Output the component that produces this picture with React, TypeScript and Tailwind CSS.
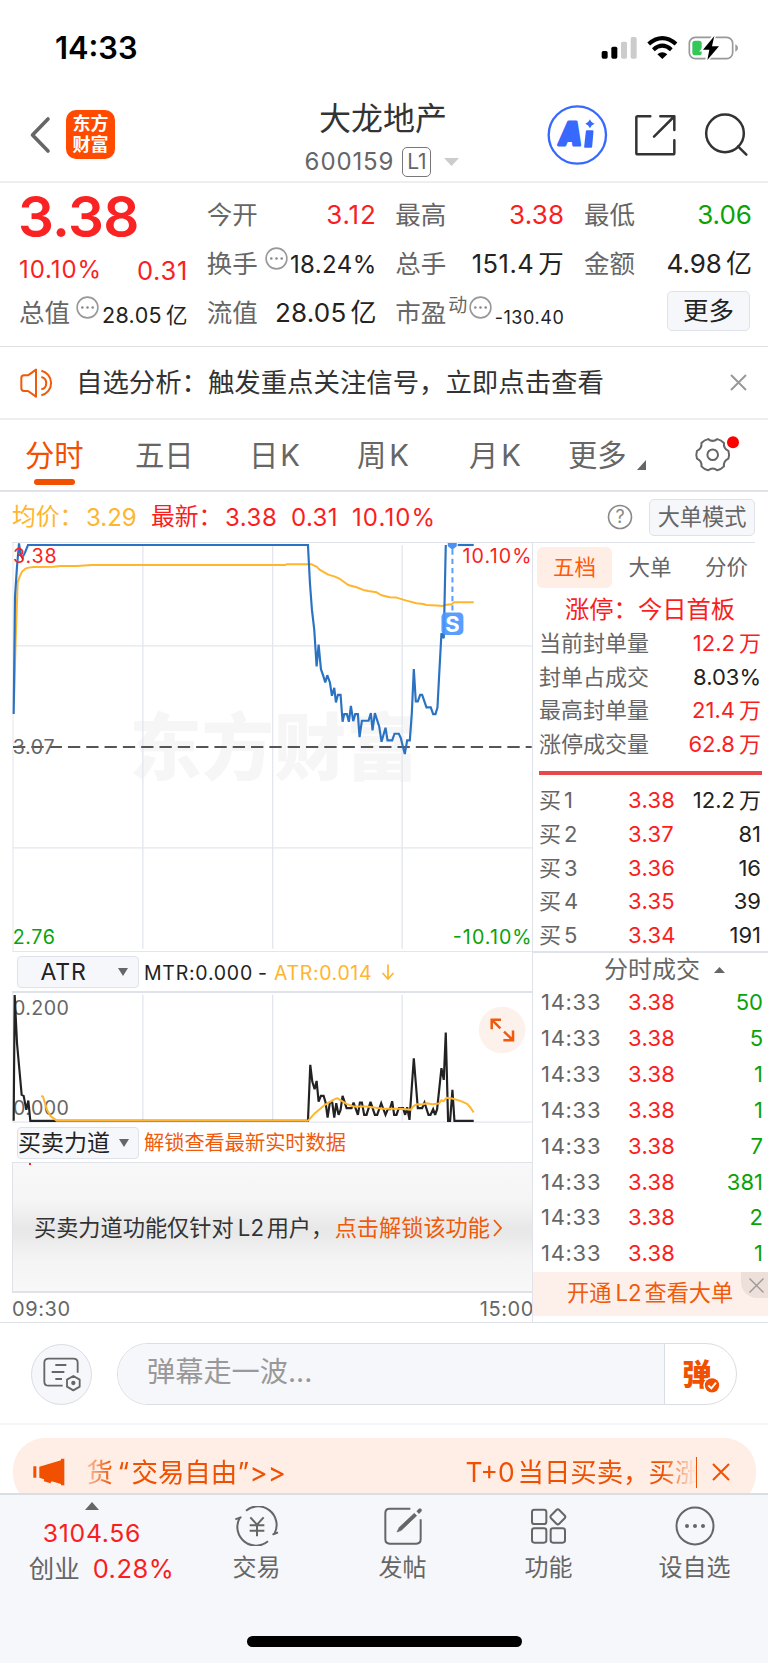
import React from "react";

type Level = { label: string; price: string; volume: string; unit?: string };

const levels: Level[] = [
  { label: "1", price: "3.38", volume: "12.2", unit: "万" },
  { label: "2", price: "3.37", volume: "81" },
  { label: "3", price: "3.36", volume: "16" },
  { label: "4", price: "3.35", volume: "39" },
  { label: "5", price: "3.34", volume: "191" },
];

const ticks = ["50", "5", "1", "1", "7", "381", "2", "1"];

const limitRows = [
  { label: "当前封单量", value: "12.2", unit: "万", tone: "text-[#fa1e1e]" },
  { label: "封单占成交", value: "8.03%", unit: "", tone: "text-[#222]" },
  { label: "最高封单量", value: "21.4", unit: "万", tone: "text-[#fa1e1e]" },
  { label: "涨停成交量", value: "62.8", unit: "万", tone: "text-[#fa1e1e]" },
];

const pricePoints =
  "40,913 44,560 50,470 56,400 61,434 66,443 74,428 83,405 924,405 930,520 936,600 943,660 950,770 956,704 963,778 970,798 976,818 982,796 990,818 996,858 1003,834 1008,878 1014,855 1022,855 1028,936 1033,913 1041,913 1047,936 1053,888 1060,934 1066,913 1074,913 1079,982 1086,933 1106,933 1113,910 1118,962 1125,910 1138,950 1145,996 1157,954 1163,992 1177,992 1184,972 1197,972 1203,985 1209,1010 1215,1033 1222,992 1230,992 1236,910 1242,778 1248,875 1254,875 1261,855 1267,855 1280,893 1293,893 1300,913 1307,913 1313,893 1319,780 1325,670 1332,685 1338,405";

const averagePoints =
  "41,880 46,690 52,518 58,500 65,485 75,476 85,473 100,471 160,470 180,468 230,468 275,465 855,465 860,463 935,463 950,470 960,480 985,494 1005,500 1020,507 1045,525 1070,532 1090,540 1105,543 1130,547 1145,556 1170,562 1190,563 1220,572 1250,580 1270,582 1280,585 1310,587 1330,588 1335,585 1355,583 1363,577 1422,577";

const mtrPoints =
  "40,423 43,45 50,190 64,345 70,348 78,390 84,362 90,423 924,423 931,255 937,305 944,328 950,303 956,365 963,348 971,348 977,368 983,413 990,367 997,368 1003,413 1009,370 1016,405 1022,390 1028,348 1040,385 1055,385 1061,368 1074,405 1080,368 1086,368 1093,405 1100,405 1112,366 1125,405 1132,405 1144,370 1157,405 1164,388 1170,388 1177,364 1183,405 1190,405 1197,385 1210,385 1216,405 1222,382 1229,420 1242,235 1248,310 1254,385 1267,385 1274,368 1286,405 1292,405 1300,388 1306,405 1312,388 1325,265 1332,300 1338,158 1345,423 1351,423 1358,330 1364,423 1422,423";

const atrPoints =
  "122,349 128,350 140,390 150,408 170,423 924,423 945,400 975,375 1000,360 1012,355 1040,372 1060,380 1100,380 1150,387 1202,387 1232,390 1242,378 1252,373 1267,374 1282,370 1297,373 1317,371 1325,361 1332,364 1340,354 1357,356 1382,363 1402,372 1412,383 1422,398";

function Unit({ children }: { children: React.ReactNode }) {
  return <span className="ml-[4px]">{children}</span>;
}

function InfoDot() {
  return (
    <svg className="h-[23px] w-[23px] shrink-0" viewBox="0 0 23 23">
      <circle cx="11.5" cy="11.5" r="10.4" fill="none" stroke="#999" strokeWidth="1.6" />
      <circle cx="6.3" cy="11.5" r="1.3" fill="#888" />
      <circle cx="11.5" cy="11.5" r="1.3" fill="#888" />
      <circle cx="16.7" cy="11.5" r="1.3" fill="#888" />
    </svg>
  );
}

function StatusBar() {
  return (
    <div className="flex h-[95px] items-center justify-between pl-[55px] pr-[29px]">
      <span className="pt-px text-[30.8px] font-semibold text-black">14:33</span>
      <svg className="h-[30px] w-[138px]" viewBox="652 97 414 90">
        <rect x="654" y="151" width="18" height="23" rx="5" />
        <rect x="683" y="138" width="18" height="36" rx="5" />
        <rect x="712" y="123" width="18" height="51" rx="5" fill="#ccc" />
        <rect x="741" y="109" width="18" height="65" rx="5" fill="#ccc" />
        <path d="M795 130Q836 95 877 130" fill="none" stroke="#000" strokeWidth="12.5" />
        <path d="M809 147Q836 123 863 147" fill="none" stroke="#000" strokeWidth="12" />
        <path d="M821 161Q836 149 851 161L836 175Z" />
        <rect x="917" y="110" width="130" height="64" rx="18" fill="none" stroke="#999" strokeWidth="5" />
        <path d="M1055 131Q1063 134 1063 142Q1063 150 1055 153Z" fill="#999" />
        <rect x="926" y="120" width="28" height="44" rx="8" fill="#34c759" />
        <path d="M992 104L956 148H976L969 180L1007 136H986Z" stroke="#fff" strokeWidth="9" />
        <path d="M992 106L958 147H977L971 178L1006 137H985Z" />
      </svg>
    </div>
  );
}

function Header() {
  return (
    <div className="flex h-[88px] items-start border-b-2 border-[#eee]">
      <div className="flex w-[302px] items-center pl-[29px] pt-[15px]">
        <svg className="h-[38px] w-[22px]" viewBox="0 0 22 38">
          <path d="M19 3L3.5 19L19 35" fill="none" stroke="#666" strokeWidth="3.6" strokeLinecap="round" strokeLinejoin="round" />
        </svg>
        <div className="ml-[15px] flex h-[49px] w-[49px] flex-col items-center justify-center rounded-[10px] bg-[#ff4a00] text-[18px] font-bold leading-[20.5px] text-white">
          <span>东方</span>
          <span>财富</span>
        </div>
      </div>
      <div className="flex w-[162px] flex-col items-center pt-[2px]">
        <span className="text-[32px] leading-[43px] text-[#333]">大龙地产</span>
        <div className="flex h-[43px] items-center pr-[2px]">
          <span className="text-[24px] tracking-[0.9px] text-[#666]">600159</span>
          <span className="ml-[8px] flex h-[30px] w-[29px] items-center justify-center rounded-[5px] border-[1.5px] border-[#777] text-[21px] text-[#666]">L1</span>
          <svg className="ml-[13px] h-[8px] w-[15px]" viewBox="0 0 15 8">
            <path d="M0 0H15L7.5 8Z" fill="#ccc" />
          </svg>
        </div>
      </div>
      <svg className="ml-[82px] mt-[9px] h-[62px] w-[210px]" viewBox="486 312 630 186">
        <circle cx="580" cy="405" r="86" fill="none" stroke="#3769ff" strokeWidth="7" />
        <text x="525" y="435" fontSize="93" fontWeight="900" fontStyle="italic" fill="#3769ff" stroke="#3769ff" strokeWidth="9" strokeLinejoin="round" textLength="68" lengthAdjust="spacingAndGlyphs">A</text>
        <path d="M609 394H625L621 440H604Z" fill="#3769ff" stroke="#3769ff" strokeWidth="7" strokeLinejoin="round" />
        <path d="M618 358Q621 368 632 371Q621 375 618 385Q614 375 604 371Q614 368 618 358Z" fill="#3769ff" />
        <g fill="none" stroke="#333" strokeWidth="7.5" strokeLinecap="round" strokeLinejoin="round">
          <path d="M799 349H761Q757 349 757 353V459Q757 463 761 463H867Q871 463 871 459V421" />
          <path d="M829 349H871V390M869 351L810 410" />
          <circle cx="1023" cy="400" r="56.5" />
          <path d="M1062 439L1087 464" />
        </g>
      </svg>
    </div>
  );
}

function Quote() {
  return (
    <div className="flex h-[164px] justify-between border-b border-[#dfe0e3] pl-[19px] pr-4 pt-[6px] text-[25.5px] text-[#222]">
      <div className="flex w-[169px] flex-col">
        <div className="-ml-px flex h-[56px] items-center pt-px text-[56.5px] font-semibold tracking-[-0.7px] text-[#fa2323]">3.38</div>
        <div className="flex h-[43px] items-center justify-between pt-[7px] text-[#fa1e1e]">
          <span className="text-[24px] tracking-[0.9px]">10.10%</span>
          <span className="pt-[2px] tracking-[0.7px]">0.31</span>
        </div>
        <div className="flex h-[49px] items-center">
          <span className="text-[#666]">总值</span>
          <div className="mb-[11px] ml-[6px] flex"><InfoDot /></div>
          <span className="ml-auto whitespace-nowrap pt-[6px] text-[21.5px] tracking-[0.4px]">28.05<Unit>亿</Unit></span>
        </div>
      </div>
      <div className="flex w-[169px] flex-col pt-px">
        <div className="flex h-[49px] items-center justify-between"><span className="-ml-px text-[#666]">今开</span><span className="text-[26px] tracking-[0.8px] text-[#fa1e1e]">3.12</span></div>
        <div className="flex h-[49px] items-center">
          <span className="-ml-px text-[#666]">换手</span>
          <div className="mb-[11px] ml-[7px] flex"><InfoDot /></div>
          <span className="ml-auto pt-[3px] text-[24px] tracking-[0.4px]">18.24%</span>
        </div>
        <div className="flex h-[49px] items-center justify-between"><span className="-ml-px text-[#666]">流值</span><span className="text-[26px] tracking-[0.2px]">28.05<Unit>亿</Unit></span></div>
      </div>
      <div className="flex w-[168px] flex-col pt-px">
        <div className="flex h-[49px] items-center justify-between"><span className="-ml-px text-[#666]">最高</span><span className="text-[26px] tracking-[0.2px] text-[#fa1e1e]">3.38</span></div>
        <div className="flex h-[49px] items-center justify-between"><span className="-ml-px text-[#666]">总手</span><span className="text-[25.5px] tracking-[0.5px]">151.4<Unit>万</Unit></span></div>
        <div className="flex h-[49px] items-center">
          <span className="-ml-px text-[#666]">市盈</span>
          <span className="mb-[15px] ml-[2px] text-[19px] text-[#666]">动</span>
          <div className="mb-[11px] ml-[2px] flex"><InfoDot /></div>
          <span className="ml-auto pt-[10px] text-[18px] tracking-[0.55px]">-130.40</span>
        </div>
      </div>
      <div className="flex w-[168px] flex-col pt-px">
        <div className="flex h-[49px] items-center justify-between"><span className="text-[#666]">最低</span><span className="text-[26px] text-[#09a309]">3.06</span></div>
        <div className="flex h-[49px] items-center justify-between"><span className="text-[#666]">金额</span><span className="text-[26px]">4.98<Unit>亿</Unit></span></div>
        <div className="flex h-[49px] items-center justify-end pr-[2px]">
          <span className="mb-[3px] flex h-[40px] w-[83px] items-center justify-center rounded-[5px] border-[1.5px] border-[#dfe2e8] bg-[#f6f7fa]">更多</span>
        </div>
      </div>
    </div>
  );
}

function Notice() {
  return (
    <div className="flex h-[73px] items-center border-b-2 border-[#eee] pl-[19px] pr-[21px]">
      <svg className="h-[32px] w-[38px] shrink-0" viewBox="57 558 114 96">
        <g fill="none" stroke="#f05a0a" strokeWidth="6" strokeLinejoin="round">
          <path d="M108 566V647L84 630H72Q64 630 64 622V591Q64 583 72 583H84Z" />
          <path d="M124 588A19 19 0 0 1 124 625M124 569A38 38 0 0 1 124 643" />
        </g>
      </svg>
      <span className="ml-[19px] whitespace-nowrap text-[26.4px] text-[#333]">自选分析：触发重点关注信号，立即点击查看</span>
      <svg className="ml-auto h-[17px] w-[17px]" viewBox="0 0 17 17">
        <path d="M1 1L16 16M16 1L1 16" stroke="#999" strokeWidth="2" />
      </svg>
    </div>
  );
}

function Tabs() {
  return (
    <div className="flex h-[72px] border-b-2 border-[#dfe3e9] pl-[25px] text-[29.3px] leading-[71px] text-[#666]">
      <div className="flex w-[110px] flex-col text-[#f05000]">
        <span className="h-[59px]">分时</span>
        <span className="ml-[9px] h-[6px] w-[41px] rounded-full bg-[#f05000]" />
      </div>
      <span className="w-[114px]">五日</span>
      <span className="w-[108px]">日<span className="ml-[2px]">K</span></span>
      <span className="w-[112px]">周<span className="ml-[3px]">K</span></span>
      <span className="w-[99px]">月<span className="ml-[3px]">K</span></span>
      <span className="w-[60px]">更多</span>
      <svg className="ml-[9px] mt-[40px] h-[10px] w-[9px]" viewBox="0 0 9 10"><path d="M9 0V10H0Z" fill="#666" /></svg>
      <svg className="ml-[46px] mt-[15px] h-[40px] w-[50px]" viewBox="0 0 50 40">
        <g transform="translate(20.7 19.7)" fill="none" stroke="#666" strokeWidth="2" strokeLinejoin="round">
          <path d="M15.7 -3.9Q17 0 15.7 3.9Q10.6 6.1 11.25 11.65Q8.4 14.7 4.5 15.6Q0 12 -4.5 15.6Q-8.4 14.7 -11.25 11.65Q-10.6 6.1 -15.7 3.9Q-17 0 -15.7 -3.9Q-10.6 -6.1 -11.25 -11.65Q-8.4 -14.7 -4.5 -15.6Q0 -12 4.5 -15.6Q8.4 -14.7 11.25 -11.65Q10.6 -6.1 15.7 -3.9Z" />
          <circle r="5.3" />
        </g>
        <circle cx="41" cy="7.3" r="6" fill="#f00" />
      </svg>
    </div>
  );
}

function ChartInfo() {
  return (
    <div className="mr-[13px] ml-3 flex h-[51px] items-center border-b border-[#dfe3e9] text-[24px] text-[#fa1e1e]">
      <span className="w-[74px] whitespace-nowrap text-[23.8px] text-[#ffb52e]">均价：</span>
      <span className="w-[65px] pt-px text-[#ffb52e]">3.29</span>
      <span className="w-[74px] whitespace-nowrap text-[23.8px]">最新：</span>
      <span className="w-[66px] pt-px tracking-[0.5px]">3.38</span>
      <span className="w-[61px] pt-px tracking-[0.4px]">0.31</span>
      <span className="pt-px tracking-[1.1px]">10.10%</span>
      <svg className="ml-auto h-[26px] w-[26px]" viewBox="0 0 26 26">
        <circle cx="13" cy="13" r="11.5" fill="none" stroke="#888" strokeWidth="1.6" />
        <text x="13" y="19.3" textAnchor="middle" fontSize="18" fill="#888">?</text>
      </svg>
      <span className="ml-[16px] flex h-[37px] w-[106px] items-center justify-center rounded-[5px] border-[1.5px] border-[#dfe2e8] bg-[#f6f7fa] text-[22.2px] text-[#666]">大单模式</span>
    </div>
  );
}

function PriceChart() {
  return (
    <svg className="block h-[410px] w-[520px]" viewBox="36 399 1560 1230">
      <text x="388" y="1093" fontSize="217" fontWeight="900" fill="#f6f6f6" textLength="868">东方财富</text>
      <g stroke="#e3e6ee" strokeWidth="4" fill="none">
        <path d="M38 399V1625" strokeWidth="3" />
        <path d="M428 405V1618M818 405V1618M1207 405V1618M38 708H1596M38 1315H1596" />
        <path d="M36 1626H1596" strokeWidth="3" />
      </g>
      <path d="M36 1011.5H1596" stroke="#555" strokeWidth="6" strokeDasharray="37 18" strokeDashoffset="-2" />
      <polyline points={averagePoints} fill="none" stroke="#ffb52e" strokeWidth="6" strokeLinejoin="round" />
      <polyline points={pricePoints} fill="none" stroke="#2b73c2" strokeWidth="6.5" strokeLinejoin="miter" strokeMiterlimit="3" />
      <path d="M1374 405H1422" stroke="#2b73c2" strokeWidth="6.5" />
      <path d="M1358 418V608" stroke="#5c9dfa" strokeWidth="6" strokeDasharray="16 12" />
      <path d="M1344 399H1371V409L1358 419L1344 409Z" fill="#4a90f5" />
      <rect x="1325" y="608" width="66" height="67" rx="13" fill="#4b96ff" fillOpacity="0.92" />
      <text x="1358" y="665" textAnchor="middle" fontSize="66" fontWeight="700" fill="#fff">S</text>
      <g fontSize="59">
        <text x="38" y="458" fill="#fa1e1e" textLength="131">3.38</text>
        <text x="1388" y="458" fill="#fa1e1e" textLength="208">10.10%</text>
        <text x="37" y="1033" fill="#666" textLength="126">3.07</text>
        <text x="37" y="1604" fill="#09a309" textLength="127">2.76</text>
        <text x="1359" y="1604" fill="#09a309" textLength="237">-10.10%</text>
      </g>
    </svg>
  );
}

function SelectBox({ children }: { children: React.ReactNode }) {
  return (
    <div className="ml-[5px] flex h-[32px] w-[122px] items-center rounded-[4px] border-[1.5px] border-[#dfe2e8] bg-[#f6f7fa] text-[23px] text-[#222]">
      <span className="flex-1 whitespace-nowrap text-center">{children}</span>
      <svg className="mr-[10px] ml-[9px] h-[8px] w-[10px] shrink-0" viewBox="0 0 10 8"><path d="M0 0H10L5 8Z" fill="#666" /></svg>
    </div>
  );
}

function LeftPane() {
  return (
    <div className="flex w-[520px] flex-col">
      <PriceChart />
      <div className="flex h-[41px] items-center border-b-2 border-[#dfe3e9] pt-px text-[19.5px] text-[#222]">
        <SelectBox><span className="tracking-[0.8px]">ATR</span></SelectBox>
        <span className="ml-[5px] w-[114px] pt-[2px] tracking-[0.75px]">MTR:0.000</span>
        <span className="w-[16px] pt-[2px]">-</span>
        <span className="w-[107px] pt-[2px] tracking-[0.65px] text-[#ffb52e]">ATR:0.014</span>
        <svg className="h-[16px] w-[14px]" viewBox="0 0 14 16"><path d="M7 0.5V15M1.5 9L7 15L12.5 9" fill="none" stroke="#ffb52e" strokeWidth="1.7" /></svg>
      </div>
      <svg className="block h-[130px] w-[520px]" viewBox="36 39 1560 390">
        <g stroke="#e3e6ee" strokeWidth="4">
          <path d="M38 39V427" strokeWidth="3" />
          <path d="M428 44V423M818 44V423M1207 44V423" />
          <path d="M36 427H1596" />
        </g>
        <g fontSize="59" fill="#666">
          <text x="38" y="105" textLength="168">0.200</text>
          <text x="38" y="404" textLength="168">0.000</text>
        </g>
        <polyline points={mtrPoints} fill="none" stroke="#222" strokeWidth="6.5" strokeMiterlimit="3" />
        <polyline points={atrPoints} fill="none" stroke="#ffb52e" strokeWidth="6" strokeLinejoin="round" />
        <circle cx="1507" cy="150" r="70" fill="#fdf1ec" />
        <path d="M1476 148V119H1504M1476 119L1502 145M1540 152V181H1511M1540 181L1513 155" fill="none" stroke="#f05a0a" strokeWidth="7.5" />
      </svg>
      <div className="flex h-[40px] items-center border-b border-[#dfe3e9] pt-px">
        <SelectBox>买卖力道</SelectBox>
        <span className="ml-[5px] text-[20.2px] text-[#f05a0a]">解锁查看最新实时数据</span>
      </div>
      <div className="flex h-[130px] flex-col border-l border-b-2 border-[#dfe3e9] bg-[linear-gradient(to_bottom,#f8f8f8_0%,#f5f5f5_30%,#e8e8e8_50%,#e9e9e9_56%,#f4f4f4_75%,#f8f8f8_100%)]">
        <span className="ml-[16px] h-[2px] w-[2px] bg-[#fa1e1e]" />
        <div className="flex flex-1 items-center whitespace-nowrap pb-px pl-[21px] text-[22.2px] text-[#333]">
          <span>买卖力道功能仅针对</span>
          <span className="ml-[4px] w-[29px] tracking-[0.3px]">L2</span>
          <span className="w-[68px]">用户，</span>
          <span className="text-[#f05a0a]">点击解锁该功能</span>
          <svg className="ml-[3px] h-[18px] w-[9px]" viewBox="0 0 9 18"><path d="M1 1L8 9L1 17" fill="none" stroke="#f05a0a" strokeWidth="1.8" /></svg>
        </div>
      </div>
      <div className="flex h-[29px] items-center justify-between pt-[3px] text-[20px] tracking-[0.6px] text-[#666]">
        <span>09:30</span>
        <span className="-mr-[2px]">15:00</span>
      </div>
    </div>
  );
}

function RightPane() {
  return (
    <div className="flex w-[236px] flex-col border-l border-[#dfe3e9] text-[22px]">
      <div className="flex pl-[4px] pt-[4px] text-[21.5px] text-[#666]">
        <span className="flex h-[41px] w-[75px] items-center justify-center rounded-[6px] bg-[#ffeee6] text-[#ff5a0a]">五档</span>
        <span className="flex h-[41px] w-[76px] items-center justify-center">大单</span>
        <span className="flex h-[41px] w-[77px] items-center justify-center">分价</span>
      </div>
      <div className="h-[38px] whitespace-nowrap pl-[32px] text-[24.3px] leading-[43px] text-[#fa1e1e]">涨停：今日首板</div>
      <div className="flex flex-col pl-[6px] pr-[7px]">
        {limitRows.map((r) => (
          <div key={r.label} className="flex h-[33.8px] items-center justify-between">
            <span className="text-[#666]">{r.label}</span>
            <span className={r.tone}>{r.value}{r.unit && <Unit>{r.unit}</Unit>}</span>
          </div>
        ))}
      </div>
      <div className="mt-[10px] ml-[6px] h-[4px] w-[223px] bg-[#e8474c]" />
      <div className="flex h-[178px] flex-col border-b-2 border-[#dfe3e9] pl-[6px] pr-[7px] pt-[8px]">
        {levels.map((l) => (
          <div key={l.label} className="flex h-[33.8px] shrink-0 items-center">
            <span className="w-[89px] text-[#666]">买<span className="ml-[3px]">{l.label}</span></span>
            <span className="tracking-[0.3px] text-[#fa1e1e]">{l.price}</span>
            <span className="ml-auto text-[#222]">{l.volume}{l.unit && <Unit>{l.unit}</Unit>}</span>
          </div>
        ))}
      </div>
      <div className="flex h-[31px] items-center pl-[71px] pt-[2px] text-[24px] text-[#666]">
        分时成交
        <svg className="ml-[14px] h-[6px] w-[11px]" viewBox="0 0 11 6"><path d="M0 6H11L5.5 0Z" fill="#666" /></svg>
      </div>
      <div className="flex h-[288px] flex-col pl-[8px] pr-[5px]">
        {ticks.map((v, i) => (
          <div key={i} className="flex h-[35.9px] shrink-0 items-center">
            <span className="w-[87px] tracking-[0.7px] text-[#666]">14:33</span>
            <span className="tracking-[0.3px] text-[#fa1e1e]">3.38</span>
            <span className="ml-auto text-[#09a309]">{v}</span>
          </div>
        ))}
      </div>
      <div className="flex h-[44px] items-start justify-between bg-[#fdf0ea] pl-[34px] text-[22.2px] leading-[41px] text-[#f05a0a]">
        <span className="whitespace-nowrap">开通<span className="ml-[4px] mr-[3px]">L2</span>查看大单</span>
        <span className="flex h-[26px] w-[27px] items-center justify-center rounded-bl-[16px] bg-[#ede0da] pl-[4px]">
          <svg className="h-[15px] w-[15px]" viewBox="0 0 15 15"><path d="M0.5 0.5L14.5 14.5M14.5 0.5L0.5 14.5" stroke="#999" strokeWidth="1.4" /></svg>
        </span>
      </div>
    </div>
  );
}

function CommentBar() {
  return (
    <div className="flex h-[103px] items-center border-t border-b-2 border-t-[#dfe3e9] border-b-[#f6f6f6] pl-[31px] pt-[2px]">
      <span className="flex h-[61px] w-[61px] items-center justify-center rounded-full border border-[#d9dde4] bg-[#f6f7fa]">
        <svg className="h-[36px] w-[40px]" viewBox="128 141 120 108">
          <g fill="none" stroke="#666" strokeWidth="5.5">
            <path d="M190 230H148Q135 230 135 218V161Q135 149 148 149H222Q235 149 235 161V191" />
            <path d="M168 168H201M157 189H195M168 210H188" />
            <path d="M222 201L241 212V233L222 244L203 233V212Z" strokeLinejoin="round" />
          </g>
          <circle cx="222" cy="222" r="6.5" fill="#666" />
        </svg>
      </span>
      <div className="ml-[25px] flex h-[62px] w-[620px] overflow-hidden rounded-full border border-[#d9dde4]">
        <span className="w-[547px] border-r border-[#d9dde4] bg-[#f6f7fa] pl-[29px] text-[28.2px] leading-[56px] text-[#999]">弹幕走一波...</span>
        <svg className="h-[60px] w-[71px]" viewBox="842 102 213 180">
          <text x="894" y="225" fontSize="88" fontWeight="900" fill="#f05000">弹</text>
          <circle cx="983" cy="226" r="26" fill="#fff" />
          <circle cx="983" cy="226" r="21.5" fill="#f05000" />
          <path d="M972 226L981 235L995 218" fill="none" stroke="#fff" strokeWidth="6" />
        </svg>
      </div>
    </div>
  );
}

function PromoBanner() {
  return (
    <div className="h-[68px] overflow-hidden px-[12.5px] pt-[13px]">
      <div className="flex h-[68px] items-center rounded-[32px] bg-[#feeee6] pl-[20px] text-[26.4px] text-[#f05000]">
        <svg className="h-[28px] w-[32px]" viewBox="98 442 96 84">
          <path d="M99 467H108V501H99ZM117 468L182 449V444H192V524H182V520L154 512L150 518L131 512V506L117 501Z" fill="#f05000" />
        </svg>
        <div className="ml-[22px] flex w-[609px] items-center overflow-hidden whitespace-nowrap pb-px leading-[36px] [mask-image:linear-gradient(to_right,rgba(0,0,0,.3)_0,#000_26px,#000_575px,rgba(0,0,0,.05)_607px)]">
          <span className="w-[31px] shrink-0">货</span>
          <span className="w-[14px] shrink-0">“</span>
          <span className="w-[106px] shrink-0">交易自由</span>
          <span className="w-[12px] shrink-0">”</span>
          <span className="w-[216px] shrink-0 text-[27.5px]">&gt;&gt;</span>
          <span className="w-[52px] shrink-0">T+0</span>
          <span className="w-[131px] shrink-0">当日买卖，</span>
          <span className="shrink-0">买涨</span>
        </div>
        <span className="h-[31px] w-[1.5px] bg-[#f05000]" />
        <svg className="ml-[15px] h-[18px] w-[18px]" viewBox="0 0 18 18"><path d="M1 1L17 17M17 1L1 17" stroke="#f05000" strokeWidth="2" /></svg>
      </div>
    </div>
  );
}

function NavItem({ label, children }: { label: string; children: React.ReactNode }) {
  return (
    <div className="flex w-[146px] flex-col items-center pt-[11px]">
      <svg className="h-[40px] w-[46px]" viewBox="-69 -60 138 120" fill="none" stroke="#666" strokeWidth="6">{children}</svg>
      <span className="pr-px pt-px text-[24px] leading-[42px] text-[#666]">{label}</span>
    </div>
  );
}

function BottomNav() {
  return (
    <div className="flex h-[170px] flex-col border-t-2 border-[#d9dde4] bg-[#f6f7fa]">
      <div className="flex h-[141px]">
        <div className="flex w-[184px] flex-col items-center pt-[7px] text-[#fa1e1e]">
          <svg className="h-[8px] w-[14px]" viewBox="0 0 14 8"><path d="M0 8H14L7 0Z" fill="#666" /></svg>
          <span className="pt-[5px] text-[24.8px] leading-[36px] tracking-[0.7px]">3104.56</span>
          <div className="mt-[2px] flex items-center pl-[19px] leading-[32px]">
            <span className="text-[25.5px] text-[#666]">创业</span>
            <span className="ml-[13px] text-[25.5px] tracking-[0.5px]">0.28%</span>
          </div>
        </div>
        <NavItem label="交易">
          <path d="M-33 -46A56 56 0 0 1 53 22L49 25L63 19M33 46A56 56 0 0 1 -53 -22L-49 -26L-65 -20" strokeLinejoin="round" />
          <path d="M-20 -26L0 -4L20 -26M0 -4V31M-22 -2H22M-22 14H22" />
        </NavItem>
        <NavItem label="发帖">
          <path d="M22 -52H-40Q-53 -52 -53 -39V40Q-53 53 -40 53H40Q53 53 53 40V-20" />
          <path d="M-18 18L-11 4L34 -38L41 -31L-5 13Z" fill="#666" strokeWidth="2" />
          <path d="M41 -44L47 -51Q52 -54 55 -50Q58 -46 54 -43L48 -37Z" fill="#666" strokeWidth="1" />
        </NavItem>
        <NavItem label="功能">
          <rect x="-51" y="-49" width="43" height="43" rx="7" />
          <rect x="-51" y="7" width="43" height="43" rx="7" />
          <rect x="5" y="7" width="43" height="43" rx="7" />
          <rect x="9" y="-45" width="35" height="35" rx="6" transform="rotate(45 26.5 -27.5)" />
        </NavItem>
        <NavItem label="设自选">
          <circle cx="0" cy="0" r="55.5" />
          <g fill="#666" stroke="none"><circle cx="-24" cy="0" r="6" /><circle cx="0" cy="0" r="6" /><circle cx="24" cy="0" r="6" /></g>
        </NavItem>
      </div>
      <div className="mx-auto h-[11px] w-[275px] rounded-full bg-black" />
    </div>
  );
}

export default function App() {
  return (
    <div className="flex h-[1663px] w-[768px] flex-col overflow-hidden bg-white font-[Inter,'Noto_Sans_CJK_SC',sans-serif] leading-none">
      <StatusBar />
      <Header />
      <Quote />
      <Notice />
      <Tabs />
      <ChartInfo />
      <div className="flex h-[779px] pl-3">
        <LeftPane />
        <RightPane />
      </div>
      <CommentBar />
      <PromoBanner />
      <BottomNav />
    </div>
  );
}
